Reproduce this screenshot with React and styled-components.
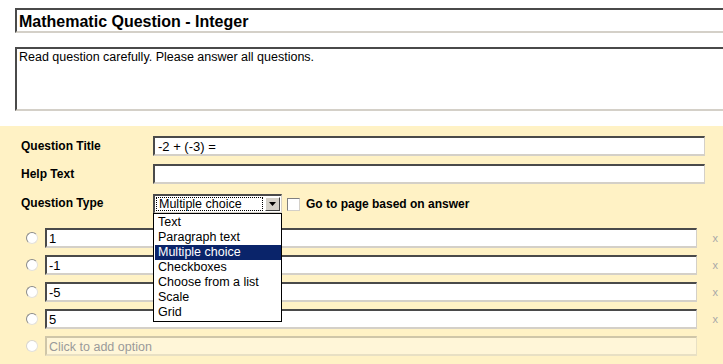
import styled, { createGlobalStyle } from "styled-components";

const GlobalStyle = createGlobalStyle`
  html, body {
    margin: 0;
    padding: 0;
    background: #fff;
    overflow: hidden;
  }
  body {
    font-family: "Liberation Sans", Arial, sans-serif;
    font-size: 12px;
    color: #000;
  }
`;

const types = [
  "Text",
  "Paragraph text",
  "Multiple choice",
  "Checkboxes",
  "Choose from a list",
  "Scale",
  "Grid",
];

const options = ["1", "-1", "-5", "5"];

const App = () => (
  <>
    <GlobalStyle />
    <Page>
      <Header>
        <TitleField>Mathematic Question - Integer</TitleField>
        <DescField>Read question carefully. Please answer all questions.</DescField>
      </Header>
      <Editor>
        <FieldGrid>
          <Label>Question Title</Label>
          <TextBox>-2 + (-3) =</TextBox>
          <Label>Help Text</Label>
          <TextBox />
          <Label>Question Type</Label>
          <TypeRow>
            <SelectWrap>
              <Select>
                <SelectValue>Multiple choice</SelectValue>
                <SelectButton>
                  <svg width="7" height="4" viewBox="0 0 7 4">
                    <path d="M0 0h7L3.5 4z" fill="#000" />
                  </svg>
                </SelectButton>
              </Select>
              <Menu>
                {types.map((t) => (
                  <MenuItem key={t} $active={t === "Multiple choice"}>
                    {t}
                  </MenuItem>
                ))}
              </Menu>
            </SelectWrap>
            <Check />
            <CheckLabel>Go to page based on answer</CheckLabel>
          </TypeRow>
        </FieldGrid>
        <Options>
          {options.map((o) => (
            <OptionRow key={o}>
              <Radio />
              <OptionBox>{o}</OptionBox>
              <Remove>x</Remove>
            </OptionRow>
          ))}
          <OptionRow>
            <Radio $disabled />
            <OptionBox $placeholder>Click to add option</OptionBox>
            <Remove />
          </OptionRow>
        </Options>
      </Editor>
    </Page>
  </>
);

export default App;

const Page = styled.div`
  width: 723px;
  height: 364px;
  display: flex;
  flex-direction: column;
`;

const Header = styled.div`
  padding: 8px 0 15px 15px;
  display: flex;
  flex-direction: column;
  gap: 14px;
`;

const sunken = `
  box-sizing: border-box;
  background: #fff;
  border-style: solid;
  border-width: 2px 1px 2px 2px;
  border-color: #4a4a4a #d4d0c8 #d4d0c8 #4a4a4a;
`;

const TitleField = styled.div`
  ${sunken}
  width: 720px;
  height: 25px;
  padding: 2px 2px;
  font-weight: bold;
  font-size: 16px;
  line-height: 19px;
`;

const DescField = styled.div`
  ${sunken}
  width: 720px;
  height: 64px;
  padding: 1px 2px;
  font-size: 12.5px;
  line-height: 14px;
`;

const Editor = styled.div`
  flex: 1;
  background: #fff2c5;
  padding-top: 10px;
`;

const FieldGrid = styled.div`
  display: grid;
  grid-template-columns: 132px 1fr;
  row-gap: 8px;
  align-items: center;
  padding: 0 18px 0 21px;
`;

const Label = styled.div`
  font-weight: bold;
`;

const TextBox = styled.div`
  ${sunken}
  height: 20px;
  padding: 1px 3px;
  line-height: 15px;
  font-size: 13px;
`;

const TypeRow = styled.div`
  display: flex;
  align-items: center;
  margin-top: 2px;
`;

const SelectWrap = styled.div`
  position: relative;
  width: 129px;
`;

const Select = styled.div`
  ${sunken}
  height: 20px;
  display: flex;
  align-items: stretch;
  padding: 1px;
`;

const SelectValue = styled.div`
  flex: 1;
  outline: 1px dotted #000;
  outline-offset: -1px;
  padding: 1px 3px;
  font-size: 12.5px;
  line-height: 13px;
`;

const SelectButton = styled.div`
  width: 15px;
  box-sizing: border-box;
  background: #d4d0c8;
  border-style: solid;
  border-width: 1px;
  border-color: #fff #404040 #404040 #fff;
  display: flex;
  align-items: center;
  justify-content: center;
  margin-left: 2px;
`;

const Menu = styled.div`
  position: absolute;
  top: 19px;
  left: 0;
  width: 129px;
  box-sizing: border-box;
  background: #fff;
  border: 1px solid #000;
  padding: 1px 0 1px 1px;
  z-index: 2;
`;

const MenuItem = styled.div`
  height: 15px;
  line-height: 15px;
  padding-left: 3px;
  font-size: 12.5px;
  background: ${(p) => (p.$active ? "#0a246a" : "transparent")};
  color: ${(p) => (p.$active ? "#fff" : "#000")};
`;

const Check = styled.div`
  ${sunken}
  width: 13px;
  height: 13px;
  margin-left: 5px;
  border-width: 1px;
  border-color: #808080 #d4d0c8 #d4d0c8 #808080;
`;

const CheckLabel = styled.div`
  font-weight: bold;
  margin-left: 6px;
`;

const Options = styled.div`
  display: flex;
  flex-direction: column;
  gap: 7px;
  margin-top: 14px;
`;

const OptionRow = styled.div`
  display: grid;
  grid-template-columns: 45px 1fr 26px;
  align-items: center;
  height: 20px;
`;

const Radio = styled.div`
  width: 12px;
  height: 12px;
  box-sizing: border-box;
  margin-left: 26px;
  border-radius: 50%;
  background: #fff;
  border: 1px solid ${(p) => (p.$disabled ? "#d8d4cc" : "#8a8a8a")};
  border-right-color: #e4e1da;
  border-bottom-color: #e4e1da;
`;

const OptionBox = styled.div`
  ${sunken}
  height: 20px;
  padding: 2px 2px;
  line-height: 14px;
  font-size: 13px;
  ${(p) =>
    p.$placeholder &&
    `
    background: #fff6d8;
    color: #9a9a9a;
    font-size: 12.5px;
    border-color: #cfc6a8 #e8e0c4 #e8e0c4 #cfc6a8;
  `}
`;

const Remove = styled.div`
  text-align: right;
  padding-right: 5px;
  color: #a8a8a8;
  font-size: 11px;
  line-height: 12px;
`;
